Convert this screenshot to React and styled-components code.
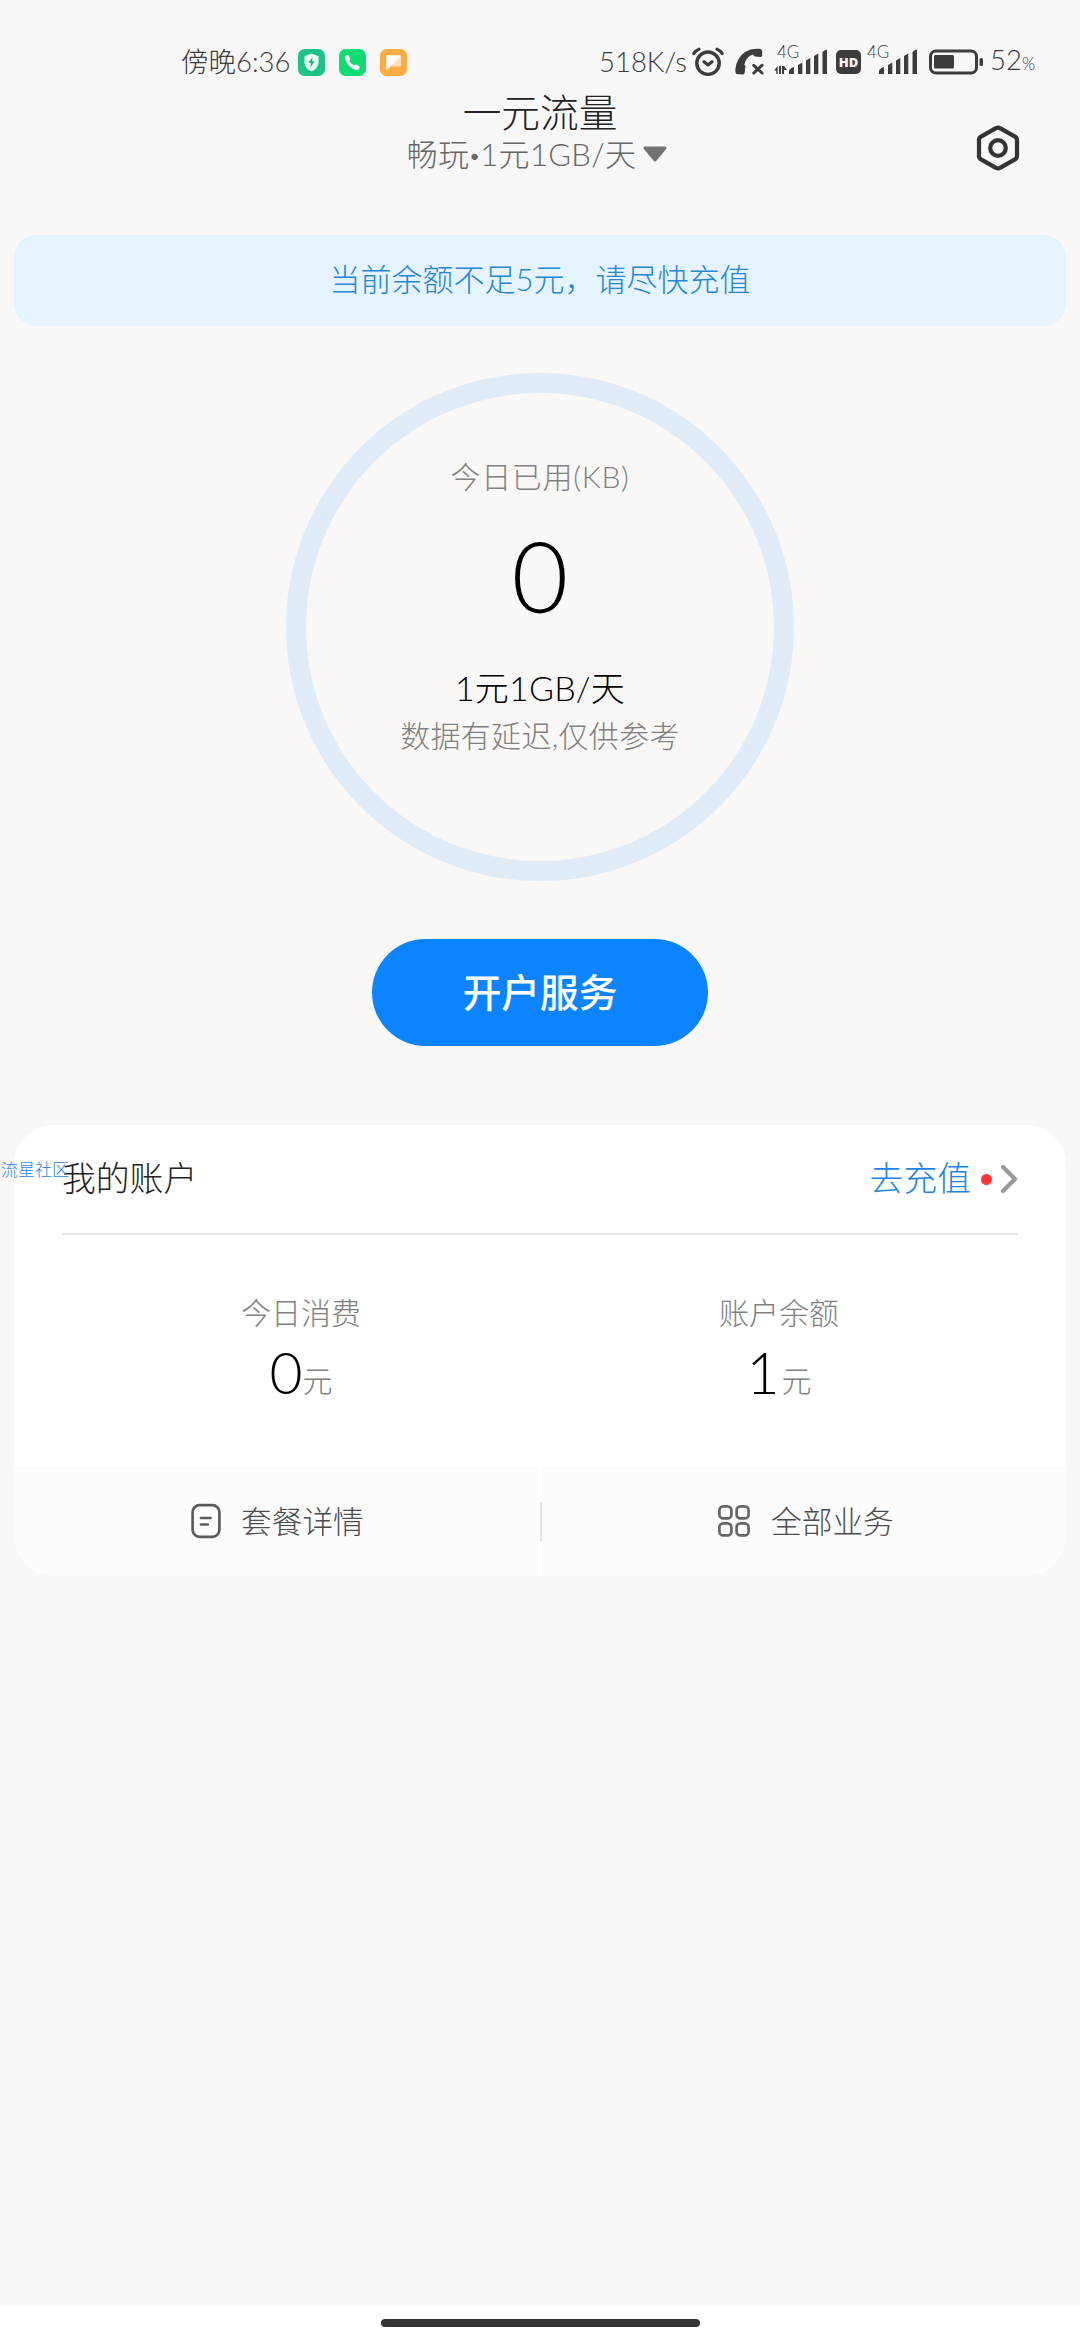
import styled, { createGlobalStyle } from 'styled-components';

const accounts = [
  { label: '今日消费', value: '0', shift: '0px' },
  { label: '账户余额', value: '1', shift: '2px' },
];

const App = () => {
  return (
    <>
      <GlobalStyle />
      <Page>
        <Header>
          <StatusBar>
            <StatusText $width="117px">傍晚6:36</StatusText>
            <AppIcons>
              <ShieldIcon />
              <CallIcon />
              <NoteIcon />
            </AppIcons>
            <StatusText $width="92px">518K/s</StatusText>
            <AlarmIcon />
            <MissedIcon />
            <SignalIcon data />
            <HdBadge>HD</HdBadge>
            <SignalIcon />
            <BatteryIcon />
            <StatusText>
              52<Percent>%</Percent>
            </StatusText>
          </StatusBar>
          <TitleBar>
            <TitleBox>
              <Title>一元流量</Title>
              <PlanButton>
                <span>
                  畅玩<MiddleDot>·</MiddleDot>1元1GB/天
                </span>
                <svg width="26" height="17" viewBox="0 0 26 17">
                  <path d="M3 2h20L13 14z" fill="#737373" stroke="#737373" strokeWidth="3" strokeLinejoin="round" />
                </svg>
              </PlanButton>
            </TitleBox>
            <SettingButton>
              <svg width="46" height="48" viewBox="0 0 46 48" fill="none" stroke="#333" strokeWidth="4.2">
                <path
                  d="M21 4.2Q23 3 25 4.2L40 12.6Q42 13.8 42 16V32Q42 34.2 40 35.4L25 43.8Q23 45 21 43.8L6 35.4Q4 34.2 4 32V16Q4 13.8 6 12.6Z"
                  strokeLinejoin="round"
                />
                <circle cx="23" cy="24" r="7.8" />
              </svg>
            </SettingButton>
          </TitleBar>
        </Header>

        <Notice>当前余额不足5元，请尽快充值</Notice>

        <Ring>
          <RingLabel>今日已用(KB)</RingLabel>
          <RingValue>0</RingValue>
          <RingPlan>1元1GB/天</RingPlan>
          <RingHint>数据有延迟,仅供参考</RingHint>
        </Ring>

        <OpenButton>开户服务</OpenButton>

        <Card>
          <Watermark>流星社区</Watermark>
          <CardHead>
            <CardTitle>我的账户</CardTitle>
            <Recharge>
              <span>去充值</span>
              <Dot />
              <svg width="18" height="30" viewBox="0 0 18 30" fill="none" stroke="#999" strokeWidth="4.2">
                <path d="M3 3L15 15L3 27" strokeLinecap="round" strokeLinejoin="round" />
              </svg>
            </Recharge>
          </CardHead>
          <Accounts>
            {accounts.map((item) => (
              <Account key={item.label}>
                <AccountLabel>{item.label}</AccountLabel>
                <Amount>
                  {item.value}
                  <Unit $shift={item.shift}>元</Unit>
                </Amount>
              </Account>
            ))}
          </Accounts>
          <CardFoot>
            <FootItem $left="177px">
              <DetailIcon />
              <span>套餐详情</span>
            </FootItem>
            <FootLine />
            <FootItem $left="175px">
              <GridIcon />
              <span>全部业务</span>
            </FootItem>
          </CardFoot>
        </Card>

        <NavBar>
          <NavPill />
        </NavBar>
      </Page>
    </>
  );
};

const ShieldIcon = () => (
  <svg width="27" height="27" viewBox="0 0 27 27">
    <rect width="27" height="27" rx="6.5" fill="#1fc387" />
    <path d="M13.5 4.5L20.5 7.2V13.5Q20.5 19 13.5 22.5Q6.5 19 6.5 13.5V7.2Z" fill="#e6fff5" />
    <path d="M14.5 8L10.3 14H13L12.3 18.5L16.7 12.3H14Z" fill="#1fb17c" />
  </svg>
);

const CallIcon = () => (
  <svg width="27" height="27" viewBox="0 0 27 27">
    <rect width="27" height="27" rx="6.5" fill="#0fdb72" />
    <path
      d="M6.6 7.3Q8 5.4 9.4 6.3L11.3 9.4Q11.6 10.3 10.2 11.6Q11.6 14.7 15 16.6Q16.5 15.2 17.4 15.5L20.6 17.4Q21.2 18.9 19.6 20.4Q17.5 21.8 13.4 19.4Q8.6 16.4 6.7 11.8Q5.7 8.9 6.6 7.3Z"
      fill="#fff"
    />
  </svg>
);

const NoteIcon = () => (
  <svg width="27" height="27" viewBox="0 0 27 27">
    <rect width="27" height="27" rx="6.5" fill="#fdac44" />
    <path d="M7.5 6.3H19.5Q21 6.3 21 7.8V8L6.2 21.6V7.6Q6.2 6.3 7.5 6.3Z" fill="#fff" />
    <path d="M21 8V17.6H10.6Z" fill="#ffe0b5" />
  </svg>
);

const AlarmIcon = () => (
  <svg width="34" height="30" viewBox="0 0 34 30" fill="none" stroke="#3c3c3c" strokeLinecap="round">
    <circle cx="17" cy="16.2" r="11.2" strokeWidth="3.4" />
    <path d="M13 14.8L17 18L21 14.8" strokeWidth="3.2" strokeLinejoin="round" />
    <path d="M2.8 6.5Q4.5 3.5 8 2.2M31.2 6.5Q29.5 3.5 26 2.2" strokeWidth="3.2" />
  </svg>
);

const MissedIcon = () => (
  <MissedSvg width="30" height="28" viewBox="0 0 30 28">
    <path
      d="M1.6 26Q0 25 0.4 21Q1.5 10 10 4Q16.5 0 24 0.8Q27.4 1 27.2 4.5V7.5Q27 9 25.4 8.9L20 8.4Q18.5 8.1 18.2 6.6Q11.5 8.2 9.3 16.8Q10.6 17.4 10.4 18.8L9.6 25Q9.3 26.4 8 26.4Z"
      fill="#3c3c3c"
    />
    <path d="M18.8 17.3L27 25M27 17.3L18.8 25" stroke="#3c3c3c" strokeWidth="3" strokeLinecap="round" />
  </MissedSvg>
);

const SignalIcon = ({ data }) => (
  <Signal $data={data}>
    <SignalLabel>4G</SignalLabel>
    <svg width="54" height="26" viewBox="0 0 54 26" fill="#3c3c3c">
      {data && <path d="M0 21.5L3.7 17V25H2.3V21.5ZM5 17H7V25H5ZM8 25V17H10L13 21H10V25Z" />}
      <path d="M15 22.5Q15 19.5 20 18V25H15ZM24 16L28.3 13.5V25H24ZM32 11.5L36.3 9V25H32ZM40 7L44.3 4.5V25H40ZM48.5 3.5Q48.5 2 53 0.5V25H48.5Z" />
    </svg>
  </Signal>
);

const BatteryIcon = () => (
  <BatterySvg width="56" height="26" viewBox="0 0 56 26">
    <rect x="1.5" y="2" width="46" height="22" rx="5.5" fill="none" stroke="#3c3c3c" strokeWidth="3" />
    <rect x="5" y="6" width="20" height="13.5" rx="1.5" fill="#3c3c3c" />
    <rect x="50.5" y="9" width="3.5" height="8" rx="1.5" fill="#3c3c3c" />
  </BatterySvg>
);

const DetailIcon = () => (
  <svg width="30" height="36" viewBox="0 0 30 36" fill="none" stroke="#5c5c5c">
    <rect x="1.6" y="2.2" width="26.8" height="31.6" rx="7" strokeWidth="2.7" />
    <path d="M10 15H19.5M10 21.5H16.8" strokeWidth="2.7" strokeLinecap="round" />
  </svg>
);

const GridIcon = () => (
  <svg width="34" height="34" viewBox="0 0 34 34" fill="none" stroke="#666" strokeWidth="2.7">
    <rect x="2.4" y="2.4" width="12" height="12" rx="4" />
    <rect x="19.6" y="2.4" width="12" height="12" rx="4" />
    <rect x="2.4" y="19.4" width="12" height="12" rx="4" />
    <rect x="19.6" y="19.4" width="12" height="12" rx="4" />
  </svg>
);

const GlobalStyle = createGlobalStyle`
  * {
    box-sizing: border-box;
  }
  body {
    margin: 0;
    background: #f9f8f6;
    font-family: Lato, 'Noto Sans CJK SC', sans-serif;
    font-weight: 300;
  }
  svg {
    display: block;
    flex-shrink: 0;
  }
  button {
    border: 0;
    padding: 0;
    background: none;
    font: inherit;
  }
`;
const Page = styled.div`
  display: flex;
  flex-direction: column;
  width: 1080px;
  height: 2340px;
  overflow: hidden;
  white-space: nowrap;
`;
const Header = styled.header`
  height: 207px;
  background: #f7f7f7;
`;
const StatusBar = styled.div`
  display: flex;
  align-items: center;
  height: 92px;
  padding: 32px 0 0 181px;
  color: #3c3c3c;
`;
const StatusText = styled.span`
  width: ${(props) => props.$width};
  font-size: 27.5px;
  line-height: 40px;
`;
const Percent = styled.span`
  font-size: 17px;
`;
const AppIcons = styled.div`
  display: flex;
  gap: 14px;
  width: 301px;
`;
const MissedSvg = styled.svg`
  margin-left: 10px;
`;
const Signal = styled.div`
  position: relative;
  margin-left: ${(props) => (props.$data ? '9px' : '3px')};
`;
const SignalLabel = styled.span`
  position: absolute;
  left: 3px;
  top: -6px;
  font-size: 17px;
  line-height: 18px;
`;
const HdBadge = styled.span`
  width: 25px;
  height: 24px;
  margin-left: 8px;
  border-radius: 5px;
  background: #3c3c3c;
  color: #f7f7f7;
  font-family: 'Open Sans', sans-serif;
  font-size: 13px;
  font-weight: 800;
  line-height: 24px;
  text-align: center;
`;
const BatterySvg = styled.svg`
  margin: 0 5px 0 11px;
`;
const TitleBar = styled.div`
  display: flex;
  height: 115px;
`;
const TitleBox = styled.div`
  width: 962px;
  padding-left: 118px;
  display: flex;
  flex-direction: column;
  align-items: center;
`;
const Title = styled.h1`
  margin: 0;
  color: #222;
  font-size: 38.7px;
  font-weight: inherit;
  line-height: 41px;
`;
const PlanButton = styled.button`
  display: flex;
  align-items: center;
  gap: 6px;
  margin-left: -5px;
  color: #666;
  font-size: 31px;
  letter-spacing: 0.3px;
  line-height: 43px;
`;
const MiddleDot = styled.span`
  margin: 0 1px;
  font-weight: 900;
`;
const SettingButton = styled.button`
  align-self: flex-start;
  margin: 32px 0 0 13px;
`;
const Notice = styled.div`
  height: 91px;
  margin: 28px 14px 0;
  border-radius: 22px;
  background: #e5f2ff;
  color: #2487d6;
  font-size: 31px;
  line-height: 89px;
  text-align: center;
`;
const Ring = styled.section`
  display: flex;
  flex-direction: column;
  align-items: center;
  width: 508px;
  height: 508px;
  margin: 47px auto 0;
  padding-top: 61px;
  border: 20px solid #e0ebf8;
  border-radius: 50%;
`;
const RingLabel = styled.div`
  color: #808080;
  font-size: 30px;
  letter-spacing: 0.7px;
  line-height: 44px;
`;
const RingValue = styled.div`
  height: 100px;
  margin-top: 27px;
  color: #000;
  font-size: 98px;
  line-height: 100px;
`;
const RingPlan = styled.div`
  margin-top: 41px;
  color: #000;
  font-size: 34px;
  letter-spacing: 0.2px;
  line-height: 44px;
`;
const RingHint = styled.div`
  margin-top: 3px;
  color: #808080;
  font-size: 30px;
  letter-spacing: 0.3px;
  line-height: 44px;
`;
const OpenButton = styled.button`
  width: 336px;
  height: 107px;
  margin: 58px auto 0;
  border-radius: 54px;
  background: #0c84ff;
  color: #fff;
  font-size: 38.7px;
  font-weight: 500;
  line-height: 103px;
`;
const Card = styled.section`
  position: relative;
  height: 451px;
  margin: 79px 14px 0;
  border-radius: 40px;
  background: #fff;
`;
const Watermark = styled.span`
  position: absolute;
  left: -13px;
  top: 34px;
  color: #1e88e5;
  font-size: 17px;
  line-height: 22px;
`;
const CardHead = styled.div`
  display: flex;
  align-items: center;
  justify-content: space-between;
  height: 110px;
  margin: 0 48px;
  border-bottom: 2px solid #e6e6e6;
  font-size: 33.8px;
  line-height: 44px;
`;
const CardTitle = styled.h2`
  margin: 0;
  padding-bottom: 2px;
  color: #222;
  font-size: inherit;
  font-weight: inherit;
`;
const Recharge = styled.div`
  display: flex;
  align-items: center;
  color: #1c84e8;

  span {
    padding-bottom: 2px;
  }
`;
const Dot = styled.i`
  width: 11px;
  height: 11px;
  margin: 0 8px 0 10px;
  border-radius: 50%;
  background: #fb3535;
`;
const Accounts = styled.div`
  display: grid;
  grid-template-columns: 478px 478px;
  justify-content: center;
  height: 231px;
  padding-top: 55px;
`;
const Account = styled.div`
  text-align: center;
`;
const AccountLabel = styled.div`
  color: #808080;
  font-size: 30px;
  line-height: 44px;
`;
const Amount = styled.div`
  color: #000;
  font-size: 57px;
  line-height: 76px;
`;
const Unit = styled.span`
  margin-left: ${(props) => props.$shift};
  color: #808080;
  font-size: 30px;
  vertical-align: 2px;
`;
const CardFoot = styled.div`
  display: flex;
  align-items: center;
  height: 110px;
  border-radius: 0 0 40px 40px;
  background: #fcfcfc;
`;
const FootItem = styled.div`
  display: flex;
  flex: 1;
  align-items: center;
  gap: 20px;
  padding-left: ${(props) => props.$left};
  color: #4d4d4d;
  font-size: 30.7px;

  span {
    padding-bottom: 4px;
  }
`;
const FootLine = styled.i`
  width: 2px;
  height: 110px;
  background: linear-gradient(#fff 36px, #e3e3e3 36px 75px, #fff 75px);
`;
const NavBar = styled.footer`
  height: 35px;
  margin-top: auto;
  padding-top: 14px;
  background: #fff;
`;
const NavPill = styled.div`
  width: 319px;
  height: 8px;
  margin: 0 auto;
  border-radius: 4px;
  background: #333;
`;

export default App;
